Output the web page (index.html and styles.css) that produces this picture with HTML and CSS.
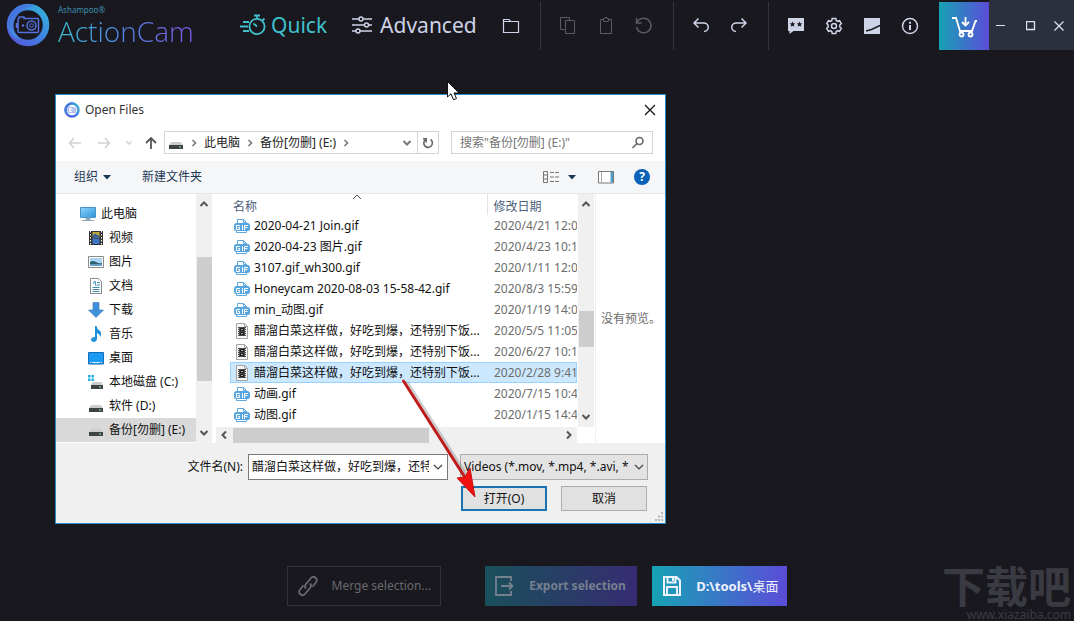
FILE: index.html
```html
<!DOCTYPE html>
<html lang="zh-CN">
<head>
<meta charset="utf-8">
<meta name="viewport" content="width=device-width, initial-scale=1">
<title>Ashampoo ActionCam</title>
<link rel="stylesheet" href="styles.css">
</head>
<body>
<svg class="sprite" aria-hidden="true">
  <defs>
    <linearGradient id="ring" x1="1" y1="0" x2="0" y2="1"><stop offset="0" stop-color="#35b4dc"/><stop offset=".5" stop-color="#3f7fe0"/><stop offset="1" stop-color="#5a55dc"/></linearGradient>
    <linearGradient id="ring2" x1="0" y1="0" x2="1" y2="1"><stop offset="0" stop-color="#4a5fe0"/><stop offset="1" stop-color="#3ab2dc"/></linearGradient>
    <linearGradient id="screen" x1="0" y1="0" x2="1" y2="1"><stop offset="0" stop-color="#8fd3f8"/><stop offset="1" stop-color="#2b95dc"/></linearGradient>
  </defs>
  <symbol id="gif" viewBox="0 0 16 16">
    <path d="M3.500 6V1.500h6l3 3V6M2.500 12v2.500h10V12" fill="#fff" stroke="#5fa8de"/>
    <path d="M9.500 1.500v3h3" fill="none" stroke="#5fa8de"/>
    <rect x="0" y="5" width="16" height="8" rx="2.500" fill="#58a6e0"/>
    <path d="M6 7.500H2.500v4h3V9.500H4M8.500 7v5M10.500 12V7.500H14M10.500 9.500h3" fill="none" stroke="#fff"/>
  </symbol>
  <symbol id="clip" viewBox="0 0 16 16">
    <path d="M2.500.5h8l3 3v12h-11z" fill="#f7f7f7" stroke="#a5a5a5"/><path d="M10.500.5v3h3" fill="none" stroke="#a5a5a5"/>
    <path d="M4 4h8v9H4z" fill="#4a4a4a"/><path d="M6 5h4v3H6zM6 9h4v3H6z" fill="#222"/><path d="M7 6h2v1H7zM7 10h2v1H7z" fill="#9ab0c4"/>
    <path d="M4.500 5v8M11.500 5v8" stroke="#eee" stroke-dasharray="1 1"/>
  </symbol>
  <symbol id="drive" viewBox="0 0 16 16">
    <path d="M3.500 7h9l2.500 3H1z" fill="#c9cccc"/><path d="M1 10h14v4H1z" fill="#3d4443"/><path d="M11 12h2" stroke="#8ff0a0"/>
  </symbol>
  <symbol id="up" viewBox="0 0 16 16"><path d="M4.500 10 8 6.500l3.500 3.500" fill="none" stroke="currentColor" stroke-width="2"/></symbol>
  <symbol id="down" viewBox="0 0 16 16"><path d="M4.500 6 8 9.500 11.500 6" fill="none" stroke="currentColor" stroke-width="2"/></symbol>
  <symbol id="left" viewBox="0 0 16 16"><path d="M10 4.500 6.500 8l3.500 3.500" fill="none" stroke="currentColor" stroke-width="2"/></symbol>
  <symbol id="right" viewBox="0 0 16 16"><path d="M6 4.500 9.500 8 6 11.500" fill="none" stroke="currentColor" stroke-width="2"/></symbol>
  <symbol id="crumb" viewBox="0 0 16 16"><path d="M6.500 5 9.500 8l-3 3" fill="none" stroke="currentColor" stroke-width="1.600"/></symbol>
  <symbol id="thin-down" viewBox="0 0 16 16"><path d="M4 6l4 4 4-4" fill="none" stroke="currentColor" stroke-width="1.200"/></symbol>
  <symbol id="caret" viewBox="0 0 16 16"><path d="M4 6h8l-4 4.500z" fill="currentColor"/></symbol>
  <symbol id="logo" viewBox="0 0 44 44">
    <circle cx="22" cy="22" r="18" fill="none" stroke="url(#ring)" stroke-width="6.500"/>
    <path d="M3 14A21 21 0 0 1 30 2.500Q14 5 9 16T14 37Q-3 30 3 14z" fill="url(#ring2)"/>
    <path d="M13 15.500v-1.500h5v1.500h13.500q1 0 1 1v12q0 1-1 1h-18.500q-1 0-1-1v-12q0-1 1-1zM10.500 20v5" fill="none" stroke="#5570dc" stroke-width="1.500"/>
    <circle cx="25.500" cy="22.500" r="4.500" fill="none" stroke="#5570dc" stroke-width="1.500"/><circle cx="25.500" cy="22.500" r="1.800" fill="none" stroke="#5570dc"/><circle cx="17" cy="22.500" r="1.200" fill="#5570dc"/>
  </symbol>
</svg>

<div class="app">
  <header class="bar">
    <div class="brand">
      <svg class="brand-mark" aria-hidden="true"><use href="#logo"/></svg>
      <div class="brand-text"><span class="maker">Ashampoo®</span><span class="product">ActionCam</span></div>
    </div>
    <nav class="modes">
      <button class="mode mode-on"><svg width="26" height="22" viewBox="0 0 26 22" fill="none" stroke="currentColor" stroke-width="1.800"><circle cx="17" cy="12.500" r="7.600"/><path d="M17 5V2M14 1.500h6M22.500 6.500l2-2M17 12.500l-3.500-3M3 8h6M0 12.500h8M3 17h6"/></svg>Quick</button>
      <button class="mode mode-advanced"><svg width="20" height="20" viewBox="0 0 20 20" fill="none" stroke="currentColor" stroke-width="1.500"><path d="M0 4h7M11 4h9M0 10h12.500M16.500 10H20M0 16h4M8 16h12"/><circle cx="9" cy="4" r="2"/><circle cx="14.500" cy="10" r="2"/><circle cx="6" cy="16" r="2"/></svg>Advanced</button>
    </nav>
    <div class="tools">
      <div class="group first">
        <button class="tool" aria-label="Open"><svg width="18" height="18" viewBox="0 0 18 18" fill="none" stroke="currentColor"><path d="M1.500 15.500v-13h5.500l1.500 2h8v11zM1.500 4.500h7" stroke-width="1.200"/></svg></button>
      </div>
      <div class="group">
        <button class="tool" disabled aria-label="Copy"><svg width="18" height="18" viewBox="0 0 18 18" fill="none" stroke="currentColor"><path d="M5.500 12.500h-4v-12h9v3M6.500 3.500h9v13h-9z"/></svg></button>
        <button class="tool" disabled aria-label="Paste"><svg width="18" height="18" viewBox="0 0 18 18" fill="none" stroke="currentColor"><path d="M6 2.500H3.500v14h11v-14H12M6.500 4.500v-3h1.500V.5h2v1h1.500v3z"/></svg></button>
        <button class="tool" disabled aria-label="Reset"><svg width="18" height="18" viewBox="0 0 18 18" fill="none" stroke="currentColor" stroke-width="1.500"><path d="M1.500 1v5H6.500M2 5.500A7.300 7.300 0 1 1 1.500 10"/></svg></button>
      </div>
      <div class="group">
        <button class="tool" aria-label="Undo"><svg width="18" height="18" viewBox="0 0 18 18" fill="none" stroke="currentColor" stroke-width="1.500"><path d="M6.500 1.500 2 6l4.500 4.500M2.500 6H12a4 4 0 0 1 0 8.500"/></svg></button>
        <button class="tool" aria-label="Redo"><svg width="18" height="18" viewBox="0 0 18 18" fill="none" stroke="currentColor" stroke-width="1.500"><path d="M11.500 1.500 16 6l-4.500 4.500M15.500 6H6a4 4 0 0 0 0 8.500"/></svg></button>
      </div>
      <div class="group">
        <button class="tool" aria-label="Feedback"><svg width="18" height="18" viewBox="0 0 18 18" fill="currentColor"><path d="M1 1h16v13H6.500L2.500 17v-3H1z"/><path d="M5.500 4.500l.8 1.800 2 .2-1.500 1.300.5 2-1.800-1-1.800 1 .5-2-1.500-1.300 2-.2zM12.500 4.500l.8 1.800 2 .2-1.500 1.300.5 2-1.800-1-1.800 1 .5-2-1.500-1.300 2-.2z" fill="#1a1a20"/></svg></button>
        <button class="tool" aria-label="Settings"><svg width="18" height="18" viewBox="0 0 18 18" fill="none" stroke="currentColor" stroke-width="1.500"><path d="M7.200 1.500h3.600l.4 2 1.300.8 2-.7 1.800 3-1.500 1.400v2l1.500 1.400-1.800 3-2-.7-1.300.8-.4 2H7.200l-.4-2-1.300-.8-2 .7-1.800-3L3.200 10V8L1.700 6.600l1.800-3 2 .7 1.300-.8z"/><circle cx="9" cy="9" r="2.500"/></svg></button>
        <button class="tool" aria-label="Theme"><svg width="18" height="18" viewBox="0 0 18 18"><path d="M1 1h16v16H1z" fill="currentColor"/><path d="M3 14l5.500-1.500L17 8.500" stroke="#1a1a20" stroke-width="1.500" fill="none"/></svg></button>
        <button class="tool" aria-label="Info"><svg width="18" height="18" viewBox="0 0 18 18" fill="none" stroke="currentColor" stroke-width="1.500"><circle cx="9" cy="9" r="7.500"/><path d="M9 8v5M9 4.800v2" stroke-width="2"/></svg></button>
      </div>
    </div>
    <button class="cart" aria-label="Shop"><svg width="26" height="26" viewBox="0 0 26 26" fill="none" stroke="currentColor" stroke-width="1.800"><path d="M1 5h4l4 13h12l3.500-10H26M14.500 4v8M11 9l3.500 3.500L18 9"/><circle cx="10.500" cy="21.500" r="2"/><circle cx="19.500" cy="21.500" r="2"/></svg></button>
    <div class="window-buttons">
      <button aria-label="Minimize"><svg width="10" height="10" stroke="currentColor"><path d="M0 4.500h9"/></svg></button>
      <button aria-label="Maximize"><svg width="10" height="10" stroke="currentColor" fill="none"><path d="M.5.500h8v8h-8z" stroke-width="1.300"/></svg></button>
      <button aria-label="Close"><svg width="10" height="10" stroke="currentColor"><path d="M.5.500l9 9M9.500.5l-9 9" stroke-width="1.200"/></svg></button>
    </div>
  </header>

  <main class="stage">
    <section class="dialog" role="dialog" aria-labelledby="dialog-title">
      <div class="titlebar">
        <svg class="icon" aria-hidden="true"><use href="#logo"/></svg>
        <h1 id="dialog-title">Open Files</h1>
        <button class="close" aria-label="关闭"><svg width="12" height="12" stroke="#111"><path d="M1 1l10 10M11 1 1 11" stroke-width="1.200"/></svg></button>
      </div>
      <div class="address">
        <button class="go" disabled aria-label="后退"><svg width="14" height="14" fill="none" stroke="currentColor" stroke-width="1.500"><path d="M13 7H1.500M6 2 1.500 7 6 12"/></svg></button>
        <button class="go" disabled aria-label="前进"><svg width="14" height="14" fill="none" stroke="currentColor" stroke-width="1.500"><path d="M1 7h11.500M8 2l4.500 5L8 12"/></svg></button>
        <button class="go recent" disabled aria-label="最近"><svg width="8" height="8" fill="none" stroke="currentColor" stroke-width="1.500"><path d="M1.500 2.500 4 5l2.500-2.500"/></svg></button>
        <button class="go parent" aria-label="上移"><svg width="14" height="14" fill="none" stroke="currentColor" stroke-width="1.800"><path d="M7 13V2M2 7l5-5 5 5"/></svg></button>
        <div class="path">
          <svg class="icon"><use href="#drive"/></svg><svg class="icon gap"><use href="#crumb"/></svg>
          <a href="#">此电脑</a><svg class="icon"><use href="#crumb"/></svg>
          <a href="#">备份[勿删] (E:)</a><svg class="icon"><use href="#crumb"/></svg>
          <button class="history" aria-label="历史"><svg class="icon"><use href="#down"/></svg></button>
          <button class="refresh" aria-label="刷新"><svg width="14" height="14" viewBox="0 0 14 14" fill="none" stroke="#666" stroke-width="1.600"><path d="M9.500 3.500A4.300 4.300 0 1 1 4.500 3.700M2 2.800h3.200V6.500"/></svg></button>
        </div>
        <div class="search">
          <input type="text" aria-label="搜索" placeholder='搜索"备份[勿删] (E:)"'>
          <svg width="14" height="14" fill="none" stroke="#666" stroke-width="1.600"><circle cx="8.500" cy="5" r="3.500"/><path d="M6 7.500 1.500 12"/></svg>
        </div>
      </div>
      <div class="commands">
        <button>组织<svg class="icon"><use href="#caret"/></svg></button>
        <button class="new-folder">新建文件夹</button>
        <button class="views" aria-label="视图"><svg width="18" height="14" fill="none" stroke="#777"><path d="M1.500 1.500h4v11h-4zM1.500 5h4M1.500 9h4"/><path d="M8 2.500h4M13 2.500h4M8 7h4M13 7h4M8 11.500h4M13 11.500h4"/></svg><svg class="icon"><use href="#caret"/></svg></button>
        <button aria-label="预览窗格"><svg width="16" height="13" fill="#fff"><path d="M.5.500h15v11.500H.5z" stroke="#777"/><path d="M3.500 1v10.500" stroke="#aaa"/><path d="M12.500 1h2.500v10.500h-2.500z" fill="#4d9cc9"/></svg></button>
        <button class="help" aria-label="帮助">?</button>
      </div>
      <div class="body">
        <ul class="places">
          <li class="root"><svg class="icon" viewBox="0 0 16 16"><path d="M.5 1.500h15v10H.5z" fill="url(#screen)" stroke="#4a93c8"/><path d="M6 12h4v1.500H6zM2 14.500h12" fill="#8aa" stroke="#8aa6b8"/></svg>此电脑</li>
          <li><svg class="icon" viewBox="0 0 16 16"><path d="M1 1h14v14H1z" fill="#333"/><path d="M4.500 2h7v5.500h-7z" fill="#c0a83c"/><path d="M4.500 8.500h7V14h-7z" fill="#3f74c8"/><path d="M4.500 5.500l3-2 4 3v1h-7z" fill="#345fa0"/><path d="M2.500 1v14M13.500 1v14" stroke="#fff" stroke-dasharray="1.500 1.500"/></svg>视频</li>
          <li><svg class="icon" viewBox="0 0 16 16"><path d="M.5 2.500h15v11H.5z" fill="#fff" stroke="#8b8b8b"/><path d="M2 4h12v8H2z" fill="#a9d4f2"/><path d="M2 8q3-2 6 0t6 1v1.500H2z" fill="#2f6174"/><path d="M2 10.500h12V12H2z" fill="#5c9fc4"/></svg>图片</li>
          <li><svg class="icon" viewBox="0 0 16 16"><path d="M2.500.5h8l3 3v12h-11z" fill="#fff" stroke="#8a8a8a"/><path d="M5 6l2-3 1 5M9 4.500h3M9 7h3M4.500 9.500h7M4.500 11.500h7M4.500 13.500h7" fill="none" stroke="#3d8cae"/></svg>文档</li>
          <li><svg class="icon" viewBox="0 0 16 16"><path d="M5 .5h6V8h4.500L8 15.500.5 8H5z" fill="#3f8fdb" stroke="#3678bb" stroke-width=".6"/></svg>下载</li>
          <li><svg class="icon" viewBox="0 0 16 16"><path d="M7 0h1.500q.5 3 3 4.500t1 6.500q-.8-3-3.500-4v6Q8.500 16 5.500 16 3 15.800 3 13.500T7 11z" fill="#1e90d8"/></svg>音乐</li>
          <li><svg class="icon" viewBox="0 0 16 16"><path d="M.5 2.500h15v11.500H.5z" fill="#1d9bf0" stroke="#1470b8"/><path d="M2 12.500h12" stroke="#d6efff" stroke-dasharray="1 1 8 1"/></svg>桌面</li>
          <li><svg class="icon" viewBox="0 0 16 16"><path d="M4.500 8h9l1.500 3H3z" fill="#c9cccc"/><path d="M3 11h12v4H3z" fill="#3d4443"/><path d="M11 13h2" stroke="#8ff0a0"/><path d="M0 1h2.500v2.500H0zM3.500 1H6v2.500H3.500zM0 4.500h2.500V7H0zM3.500 4.500H6V7H3.500z" fill="#21b0e0"/></svg>本地磁盘 (C:)</li>
          <li><svg class="icon"><use href="#drive"/></svg>软件 (D:)</li>
          <li class="current"><svg class="icon"><use href="#drive"/></svg>备份[勿删] (E:)</li>
        </ul>
        <div class="scroll-v"><svg class="icon"><use href="#up"/></svg><span class="thumb places-thumb"></span><svg class="icon"><use href="#down"/></svg></div>
        <div class="files">
          <div class="files-view">
            <svg class="sort" width="10" height="6" fill="none" stroke="#555"><path d="M1 5l4-4 4 4"/></svg>
            <table>
              <colgroup><col class="col-name"><col></colgroup>
              <thead><tr><th>名称</th><th>修改日期</th></tr></thead>
              <tbody>
                <tr><td><svg class="icon"><use href="#gif"/></svg>2020-04-21 Join.gif</td><td>2020/4/21 12:05</td></tr>
                <tr><td><svg class="icon"><use href="#gif"/></svg>2020-04-23 图片.gif</td><td>2020/4/23 10:12</td></tr>
                <tr><td><svg class="icon"><use href="#gif"/></svg>3107.gif_wh300.gif</td><td>2020/1/11 12:05</td></tr>
                <tr><td><svg class="icon"><use href="#gif"/></svg>Honeycam 2020-08-03 15-58-42.gif</td><td>2020/8/3 15:59</td></tr>
                <tr><td><svg class="icon"><use href="#gif"/></svg>min_动图.gif</td><td>2020/1/19 14:05</td></tr>
                <tr><td><svg class="icon"><use href="#clip"/></svg>醋溜白菜这样做，好吃到爆，还特别下饭...</td><td>2020/5/5 11:05</td></tr>
                <tr><td><svg class="icon"><use href="#clip"/></svg>醋溜白菜这样做，好吃到爆，还特别下饭...</td><td>2020/6/27 10:12</td></tr>
                <tr class="selected"><td><svg class="icon"><use href="#clip"/></svg>醋溜白菜这样做，好吃到爆，还特别下饭...</td><td>2020/2/28 9:41</td></tr>
                <tr><td><svg class="icon"><use href="#gif"/></svg>动画.gif</td><td>2020/7/15 10:42</td></tr>
                <tr><td><svg class="icon"><use href="#gif"/></svg>动图.gif</td><td>2020/1/15 14:42</td></tr>
              </tbody>
            </table>
          </div>
          <div class="scroll-h"><svg class="icon"><use href="#left"/></svg><span class="thumb"></span><svg class="icon"><use href="#right"/></svg></div>
        </div>
        <div class="scroll-v files-scroll"><svg class="icon"><use href="#up"/></svg><span class="thumb files-thumb"></span><svg class="icon"><use href="#down"/></svg></div>
        <div class="preview">没有预览。</div>
      </div>
      <form class="choose">
        <div class="choose-row">
          <label for="filename">文件名(N):</label>
          <div class="combo"><input id="filename" type="text" value="醋溜白菜这样做，好吃到爆，还特别下饭"><button type="button" aria-label="文件名列表"><svg class="icon"><use href="#thin-down"/></svg></button></div>
          <div class="filter"><select aria-label="文件类型"><option>Videos (*.mov, *.mp4, *.avi, *</option></select><svg class="icon"><use href="#thin-down"/></svg></div>
        </div>
        <div class="choose-row actions">
          <button type="button" class="primary">打开(O)</button><button type="button">取消</button>
        </div>
        <svg class="grip" width="10" height="10" fill="#b8b8b8"><path d="M7 0h2v2H7zM4 3.500h2v2H4zM7 3.500h2v2H7zM1 7h2v2H1zM4 7h2v2H4zM7 7h2v2H7z"/></svg>
      </form>
    </section>
    <svg class="pointer-arrow" width="90" height="130" viewBox="0 0 90 130" aria-hidden="true"><path d="M6.500 5 66 98" stroke="#888" stroke-opacity=".4" stroke-width="4"/><path d="M3.500 4 66 102" stroke="#c01a1a" stroke-width="3" stroke-linecap="round"/><path d="M57 101 65 100 70 91 75 120z" fill="#f01010" stroke="#c41414"/></svg>
    <svg class="cursor" width="14" height="20" viewBox="0 0 14 20" aria-hidden="true"><path d="M.5.500v15.500l3.500-3.200 2.500 6 3-1.300L7 12h5z" fill="#fff" stroke="#111"/></svg>
  </main>

  <footer class="actions-bar">
    <button class="big merge" disabled><svg width="22" height="22" viewBox="0 0 22 22" fill="none" stroke="currentColor" stroke-width="1.800"><path d="M9 13.500q-2-2 0-4.500l5-6q2-2.300 4.500-.3t.5 4.500l-3.500 4.500M13 8.500q2 2 0 4.500l-5 6q-2 2.300-4.500.3T3 14.800l3.500-4.500"/></svg>Merge selection...</button>
    <button class="big export" disabled><svg width="22" height="22" viewBox="0 0 22 22" fill="none" stroke="currentColor" stroke-width="1.800"><path d="M17 6V2H2v18h15v-4M7 11h11M15 7.500l3.500 3.500L15 14.500"/></svg>Export selection</button>
    <button class="big target"><svg width="22" height="22" viewBox="0 0 22 22" fill="none" stroke="currentColor" stroke-width="2"><path d="M3 2h12.500L19 5.500V20H3zM6.500 2v5.500h8V2M6 20v-8h10v8M12 3v3"/></svg><span>D:\tools\<span class="zh">桌面</span></span></button>
    <div class="mark"><span class="mark-name">下载吧</span><span class="mark-url">www.xiazaiba.com</span></div>
  </footer>
</div>
</body>
</html>
```
FILE: styles.css
```css
* { box-sizing: border-box; }
body { margin: 0; background: #19181e; font: 12px/16px "Noto Sans", "Noto Sans CJK SC", sans-serif; }
button, input, select { font: inherit; color: inherit; margin: 0; padding: 0; border: 0; background: none; border-radius: 0; }
button { display: flex; align-items: center; justify-content: center; }
svg { flex: none; display: block; }
a { color: inherit; text-decoration: none; }
.sprite { position: absolute; width: 0; height: 0; }
.icon { width: 16px; height: 16px; }

.app { min-height: 100vh; display: flex; flex-direction: column; color: #ced3e8; }
.bar { display: flex; align-items: stretch; height: 50px; }
.brand { display: flex; align-items: center; padding-left: 6px; gap: 8px; width: 240px; }
.brand-mark { width: 44px; height: 44px; }
.brand-text { display: flex; flex-direction: column; padding-top: 2px; }
.maker { font-size: 8px; line-height: 10px; color: #3f8fae; }
.product { font: 300 28px/32px "Open Sans", sans-serif; width: max-content; color: transparent; background: linear-gradient(90deg, #3fbcd0, #5088e4 45%, #7d58e4); background-clip: text; -webkit-background-clip: text; }
.modes { display: flex; gap: 25px; }
.mode { font-size: 21px; gap: 5px; }
.mode-on { color: #3fc0cc; }
.mode-advanced { gap: 8px; }
.tools { display: flex; margin-left: auto; padding-top: 2px; }
.group { display: flex; padding: 0 10px 0 8px; border-left: 1px solid #34353f; }
.first { border-left: 0; }
.tool { width: 38px; }
.tool:disabled { color: #5a5b62; }
.cart { width: 50px; margin-top: 2px; color: #fff; background: linear-gradient(90deg, #17a2b4, #5b4cd8); }
.window-buttons { display: flex; width: 85px; padding: 1px 3px 0 0; background: #2c303c; }
.window-buttons button { flex: 1; color: #dfe3f0; }
.window-buttons button:first-child { padding-right: 6px; }
.window-buttons button:last-child { padding-left: 4px; }

.stage { flex: 1; }
.dialog { position: absolute; left: 55px; top: 94px; width: 611px; background: #fff; border: 1px solid #2b8bc4; color: #111; }
.titlebar { display: flex; align-items: center; height: 29px; padding: 0 8px; gap: 5px; }
.titlebar h1 { margin: 0; font-size: 12px; font-weight: 400; color: #333; }
.close { margin-left: auto; width: 14px; height: 16px; }
.address { display: flex; align-items: center; height: 37px; padding: 0 12px; }
.go { width: 14px; height: 16px; margin-right: 15px; color: #555; }
.go:disabled { color: #d2d2d2; }
.recent { margin: 0 8px 0 -4px; }
.parent { margin-right: 6px; }
.path { flex: 1; display: flex; align-items: center; height: 23px; border: 1px solid #d4d4d4; padding-left: 3px; color: #222; }
.path .icon { color: #777; margin: 0 2px; }
.path .icon:first-child { margin: 0; }
.path .gap { margin-left: 2px; }
.history { margin-left: auto; width: 20px; height: 21px; }
.refresh { width: 21px; height: 21px; border-left: 1px solid #d4d4d4; }
.search { display: flex; align-items: center; width: 202px; height: 23px; margin-left: 12px; padding: 0 7px 0 8px; border: 1px solid #d4d4d4; }
.search input { flex: 1; min-width: 0; outline: 0; }
.search input::placeholder { color: #757575; opacity: 1; }
.commands { display: flex; align-items: center; height: 33px; padding: 0 15px 0 18px; background: #f4f6f8; border-bottom: 1px solid #e4e6e8; color: #1e3656; }
.commands button { gap: 1px; }
.new-folder { margin-left: 27px; }
.commands .views { margin: 0 18px 0 auto; gap: 4px; }
.commands .help { width: 16px; height: 16px; margin-left: 20px; border-radius: 50%; background: #0b62b8; color: #fff; font-weight: 700; }
.body { display: flex; height: 249px; }
.places { list-style: none; margin: 0; padding: 8px 0 0; width: 140px; }
.places li { display: flex; align-items: center; height: 24px; padding-left: 32px; gap: 5px; white-space: nowrap; }
.places .root { padding-left: 24px; }
.places .current { background: #d9d9d9; }
.scroll-v { display: flex; flex-direction: column; align-items: center; width: 16px; padding: 2px 0; background: #f0f0f0; color: #555; }
.thumb { background: #cdcdcd; }
.scroll-v .thumb { width: 15px; margin-bottom: auto; }
.places-thumb { height: 124px; margin-top: 45px; }
.files { width: 365px; padding-left: 4px; display: flex; flex-direction: column; }
.files-view { flex: 1; position: relative; padding-left: 14px; overflow: hidden; }
.sort { position: absolute; left: 136px; top: 0; }
table { width: 347px; table-layout: fixed; border-collapse: collapse; }
.col-name { width: 257px; }
th { height: 21px; padding: 4px 0 0 3px; text-align: left; font-weight: 400; color: #4c607a; }
th + th { padding-left: 6px; border-left: 1px solid #e2e2e2; }
td { height: 21px; padding: 0 0 0 24px; white-space: nowrap; overflow: hidden; line-height: 16px; }
td .icon { float: left; margin-left: -20px; }
td + td { padding-left: 7px; color: #6d6d6d; }
.selected { background: #cce8ff; box-shadow: inset 0 0 0 1px #99d1ff; }
.scroll-h { display: flex; align-items: center; height: 16px; background: #f0f0f0; color: #555; }
.scroll-h .thumb { width: 196px; height: 15px; margin: 0 auto 0 1px; }
.files-scroll { height: 233px; margin-left: 1px; }
.files-thumb { height: 36px; margin-top: 99px; }
.preview { flex: 1; border-left: 1px solid #f0f0f0; margin-left: 1px; padding-left: 5px; display: flex; align-items: center; color: #6d6d6d; white-space: nowrap; }
.choose { position: relative; background: #f0f0f0; padding: 11px 17px 12px; display: flex; flex-direction: column; gap: 6px; }
.choose-row { display: flex; justify-content: flex-end; align-items: center; }
.combo { display: flex; width: 200px; height: 26px; margin: 0 12px 0 5px; border: 1px solid #7a7a7a; background: #fff; }
.combo input { flex: 1; min-width: 0; padding-left: 3px; outline: 0; }
.combo button { width: 18px; color: #444; }
.filter { display: flex; align-items: center; width: 188px; height: 26px; border: 1px solid #adadad; background: #e3e3e3; color: #444; }
.filter select { flex: 1; min-width: 0; height: 24px; padding-left: 3px; appearance: none; -webkit-appearance: none; color: #111; outline: 0; }
.actions { gap: 14px; padding-right: 1px; }
.actions button { width: 86px; height: 25px; background: #e1e1e1; border: 1px solid #adadad; }
.actions .primary { border: 2px solid #1a72b4; }
.grip { position: absolute; right: 1px; bottom: 1px; }
.pointer-arrow { position: absolute; left: 400px; top: 377px; }
.cursor { position: absolute; left: 447px; top: 81px; }

.actions-bar { position: relative; display: flex; justify-content: center; padding-bottom: 15px; }
.big { height: 40px; padding: 0 9px; gap: 13px; font-size: 12px; white-space: nowrap; justify-content: flex-start; }
.merge { min-width: 154px; margin-right: 44px; border: 1px solid #303037; color: #68696f; }
.export { min-width: 152px; margin-right: 15px; font-weight: 700; color: #75808f; background: linear-gradient(90deg, #19505a, #372c72); }
.target { min-width: 134px; font-size: 13px; font-weight: 700; color: #eef2ff; background: linear-gradient(90deg, #17a2b4, #5b4cd8); }
.zh { font-weight: 400; }
.mark { position: absolute; right: 3px; bottom: 0; display: flex; flex-direction: column; align-items: flex-end; color: #3a3b42; }
.mark-name { font-size: 43px; line-height: 44px; font-weight: 700; }
.mark-url { font-size: 12px; line-height: 12px; }
```
